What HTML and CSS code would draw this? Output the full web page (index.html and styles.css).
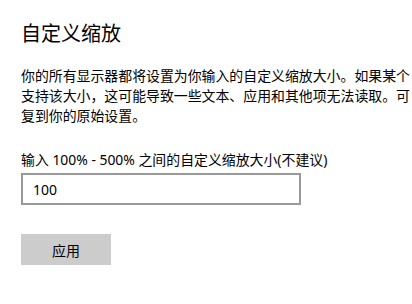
FILE: index.html
```html
<!DOCTYPE html>
<html lang="zh-CN">
<head>
  <meta charset="UTF-8">
  <meta name="viewport" content="width=device-width, initial-scale=1.0">
  <title>自定义缩放</title>
  <link rel="stylesheet" href="styles.css">
</head>
<body>
  <div class="page">
    <h1 class="title">自定义缩放</h1>
    <p class="desc">
      <span class="line">你的所有显示器都将设置为你输入的自定义缩放大小。如果某个</span>
      <span class="line">支持该大小，这可能导致一些文本、应用和其他项无法读取。可</span>
      <span class="line">复到你的原始设置。</span>
    </p>
    <label class="field-label" for="scale">输入 100% - 500% 之间的自定义缩放大小(不建议)</label>
    <input class="scale-input" id="scale" type="text" value="100">
    <button class="apply-button">应用</button>
  </div>
</body>
</html>
```

FILE: styles.css
```css
html, body {
  margin: 0;
  padding: 0;
  background-color: #fff;
  overflow: hidden;
}

body {
  font-family: "Noto Sans", "Noto Sans CJK SC", sans-serif;
  color: #000;
}

.page {
  padding: 20px 0 0 21px;
  display: flex;
  flex-direction: column;
  align-items: flex-start;
}

.title {
  font-size: 20px;
  font-weight: 400;
  line-height: 28px;
  margin: 0;
}

.desc {
  margin: 18px 0 0 0;
  font-size: 13.9px;
  line-height: 20px;
}

.desc .line {
  display: block;
  white-space: nowrap;
}

.field-label {
  margin-top: 24px;
  font-size: 13.9px;
  line-height: 20px;
}

.scale-input {
  margin-top: 3px;
  width: 280px;
  height: 32px;
  box-sizing: border-box;
  border: 2px solid #999;
  padding: 0 10px;
  font-family: inherit;
  font-size: 14px;
  color: #000;
  outline: none;
}

.apply-button {
  margin-top: 29px;
  width: 90px;
  height: 31px;
  border: none;
  background-color: #ccc;
  font-family: inherit;
  font-size: 14px;
  color: #000;
  cursor: pointer;
}
```
